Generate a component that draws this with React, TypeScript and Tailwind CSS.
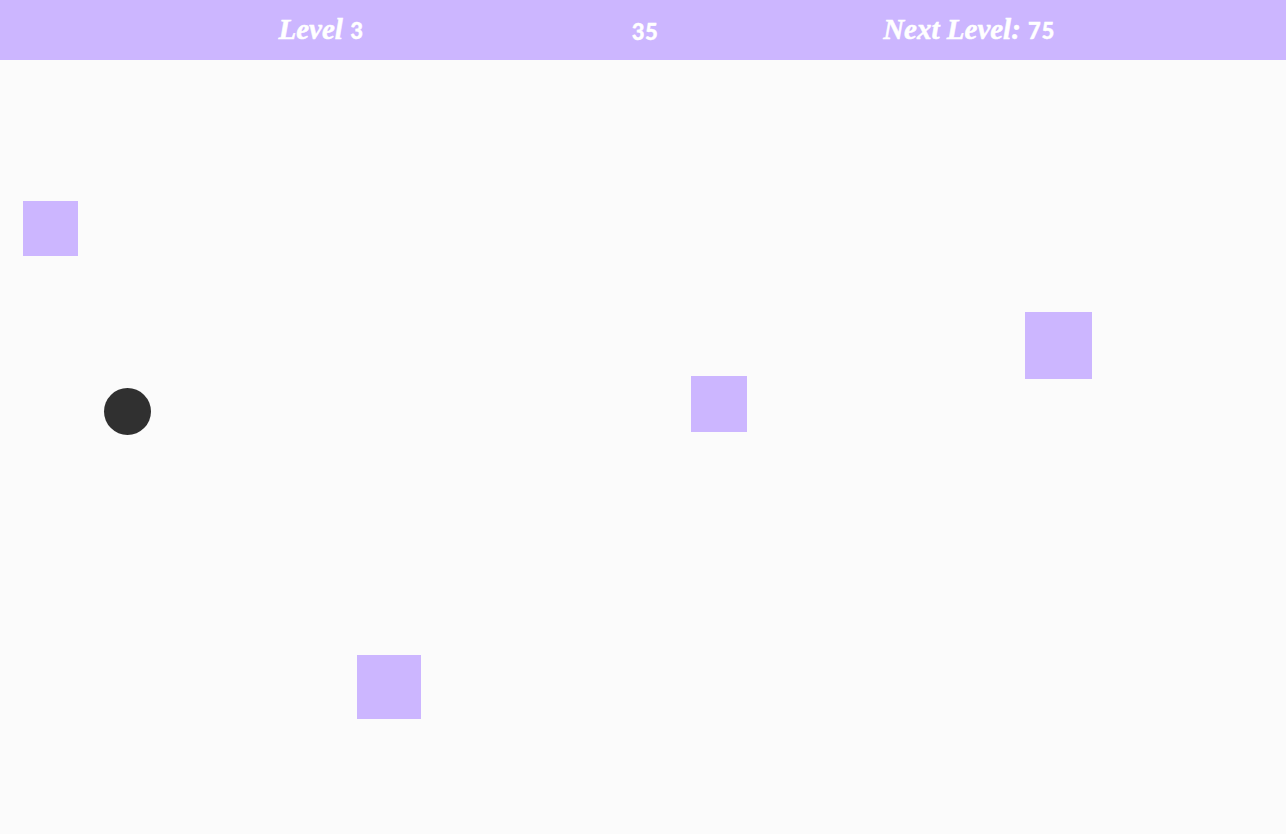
const squares = [
  "left-[23px] top-[141.5px] h-[54.5px] w-[54.6px]",
  "left-[691px] top-[316.5px] h-[55.5px] w-[55.6px]",
  "left-[1025px] top-[252.5px] h-[66.6px] w-[66.6px]",
  "left-[357px] top-[595.5px] h-[64.4px] w-[64.4px]",
];

const digits = "font-['Lato',sans-serif] text-[22px] font-black not-italic tracking-[0.6px] [-webkit-text-stroke:0.4px_white]";

export default function App() {
  return (
    <div className="flex h-[834px] w-[1286px] flex-col overflow-hidden bg-[#fbfbfb]">
      {/* Score bar */}
      <header className="h-[59.5px] shrink-0 bg-[#ccb6ff] pl-1 text-white">
        <div className="mx-auto grid h-full w-[972px] grid-cols-3 items-center text-center font-['Liberation_Serif',serif] text-[29px] font-bold italic leading-none [-webkit-text-stroke:0.5px_white]">
          <div>
            Level <span className={digits}>3</span>
          </div>
          <div className={`pt-1 ${digits}`}>35</div>
          <div>
            Next Level: <span className={digits}>75</span>
          </div>
        </div>
      </header>

      {/* Game canvas */}
      <main className="relative flex-1">
        {squares.map((pos) => (
          <div key={pos} className={`absolute bg-[#ccb6ff] ${pos}`} />
        ))}
        <div className="absolute left-[103.8px] top-[328px] h-[47.6px] w-[47.6px] rounded-full bg-[#303030]" />
      </main>
    </div>
  );
}
